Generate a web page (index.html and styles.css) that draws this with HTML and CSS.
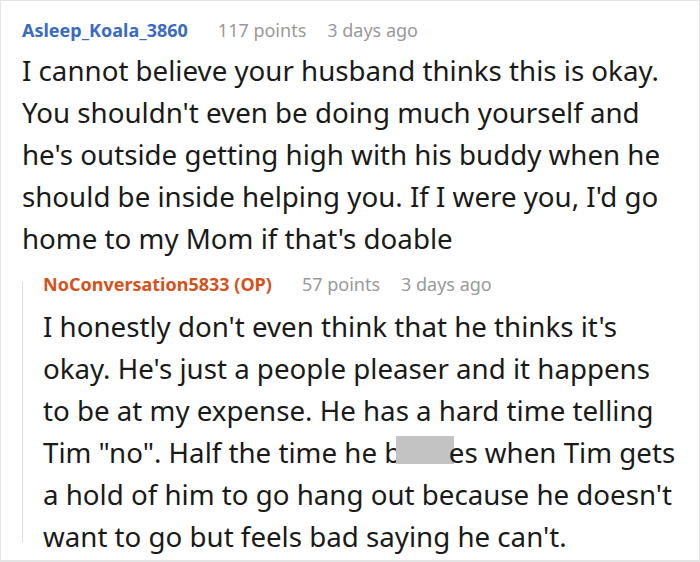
FILE: index.html
```html
<!DOCTYPE html>
<html>
<head>
<meta charset="utf-8">
<link rel="stylesheet" href="styles.css">
</head>
<body>
<div class="thread">
  <div class="comment">
    <div class="meta">
      <span class="author">Asleep_Koala_3860</span>
      <span class="points">117 points</span>
      <span class="time">3 days ago</span>
    </div>
    <p class="text">I cannot believe your husband thinks this is okay. You shouldn't even be doing much yourself and he's outside getting high with his buddy when he should be inside helping you. If I were you, I'd go home to my Mom if that's doable</p>
  </div>
  <div class="reply">
    <div class="thread-line"></div>
    <div class="reply-body">
      <div class="meta">
        <span class="author op">NoConversation5833 (OP)</span>
        <span class="points">57 points</span>
        <span class="time">3 days ago</span>
      </div>
      <p class="text">I honestly don't even think that he thinks it's<br>okay. He's just a people pleaser and it happens<br>to be at my expense. He has a hard time telling Tim "no". Half the time he b<span class="redact">itch</span>es when Tim gets a hold of him to go hang out because he doesn't want to go but feels bad saying he can't.</p>
    </div>
  </div>
</div>
</body>
</html>
```

FILE: styles.css
```css
html, body {
  margin: 0;
  padding: 0;
  background: #ffffff;
}

.thread {
  box-sizing: border-box;
  width: 700px;
  height: 562px;
  border: 1px solid #e4e4e4;
  border-bottom-width: 2px;
  padding: 0 0 0 21px;
  font-family: "Noto Sans", "Open Sans", sans-serif;
  color: #1a1a1a;
  overflow: hidden;
}

.meta {
  height: 24px;
  line-height: 24px;
  font-size: 18px;
  white-space: nowrap;
  display: flex;
}

.comment > .meta {
  margin-top: 17px;
}

.author {
  font-weight: 700;
  color: #3a6bbf;
  margin-right: 30px;
}

.author.op {
  color: #d4521c;
}

.points {
  color: #999999;
  margin-right: 21px;
}

.time {
  color: #999999;
}

.text {
  margin: 7px 0 0 0;
  font-size: 27.7px;
  line-height: 42px;
  width: 665px;
}

.reply {
  display: flex;
  margin-top: 13px;
}

.thread-line {
  width: 1px;
  background: #dddddd;
  margin: 10px 0 15px 0;
  flex: none;
}

.reply-body {
  padding-left: 20px;
}

.reply-body .text {
  margin-top: 9px;
  width: 650px;
}

.redact {
  display: inline-block;
  height: 28px;
  line-height: 28px;
  padding: 0 5px;
  margin: 0 -5px;
  background: #c3c3c3;
  color: #c3c3c3;
  vertical-align: 2px;
}
```
